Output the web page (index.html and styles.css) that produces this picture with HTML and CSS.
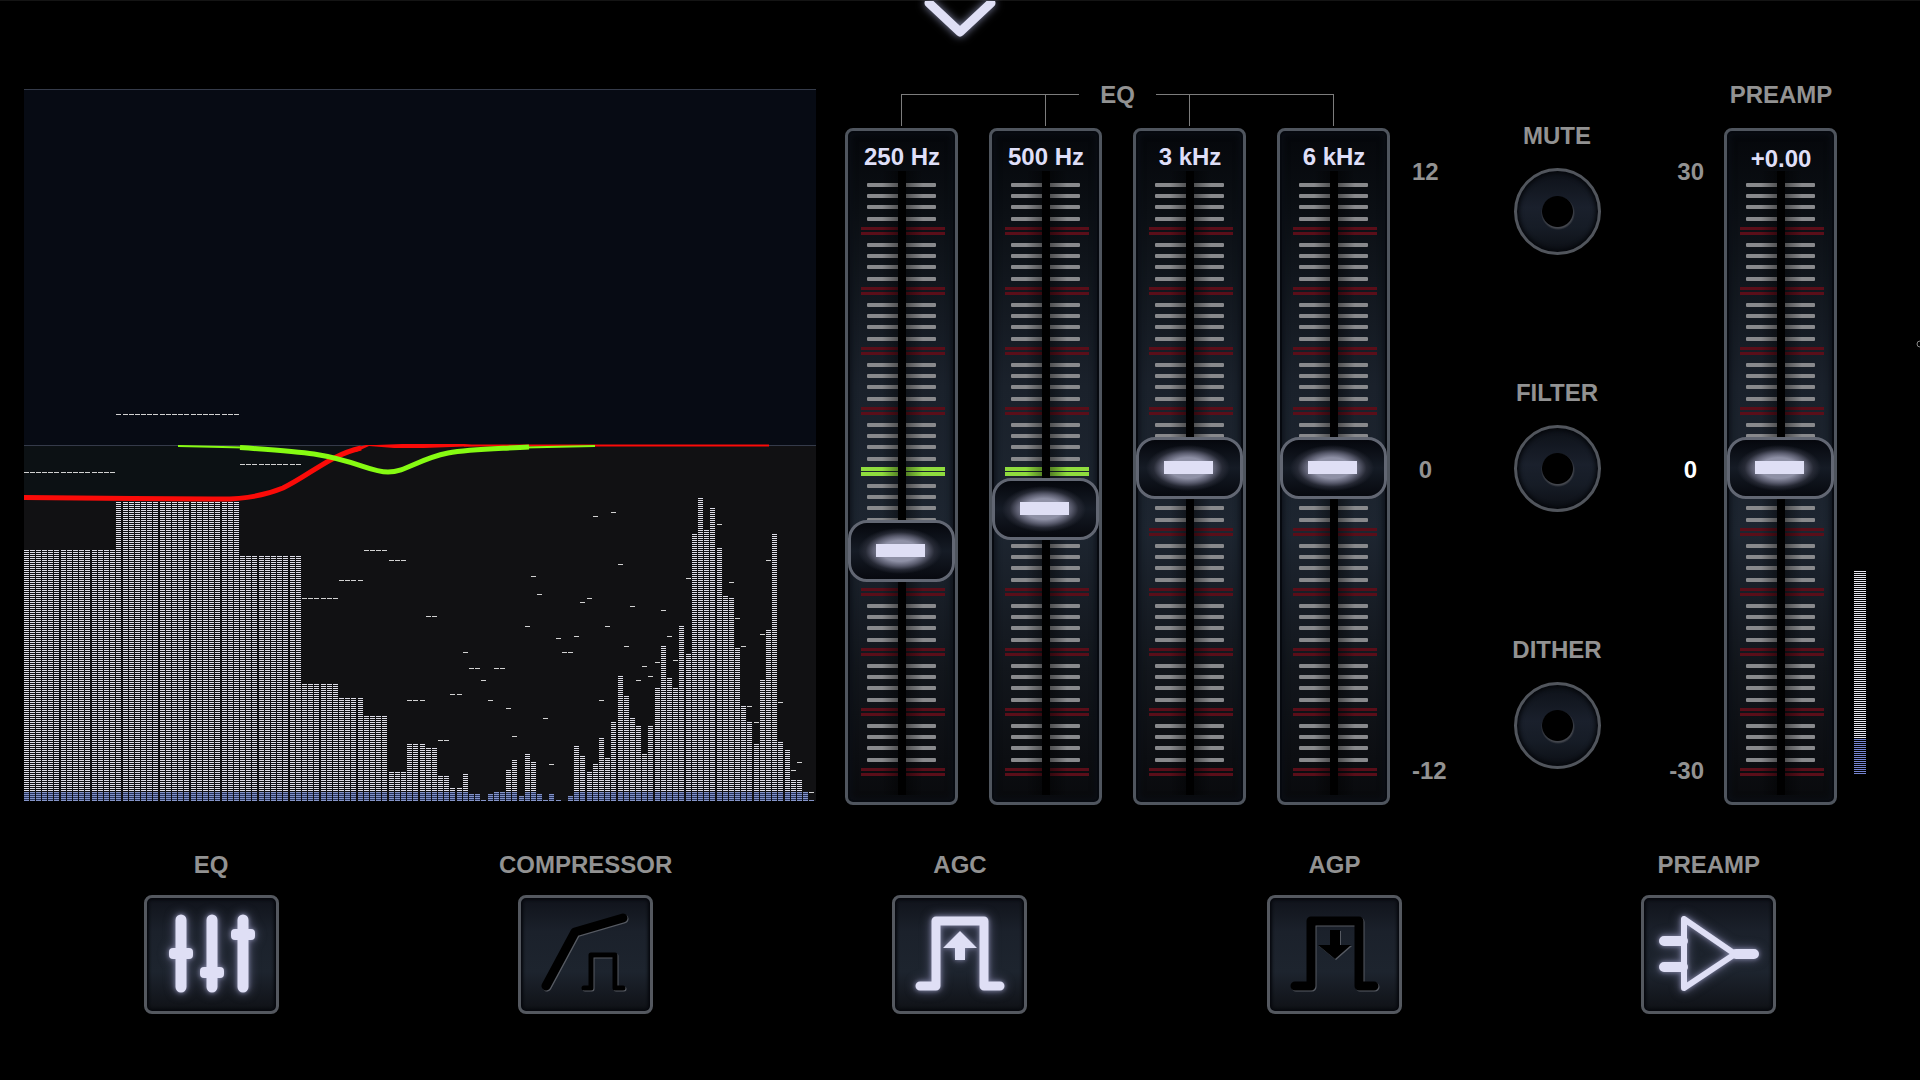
FILE: index.html
```
<!DOCTYPE html>
<html lang="en">
<head>
<meta charset="utf-8">
<meta name="viewport" content="width=device-width, initial-scale=1">
<title>Equalizer</title>
<link rel="stylesheet" href="styles.css">
</head>
<body>
<header class="topbar">
  <button class="collapse" aria-label="Collapse">
    <svg width="80" height="44" viewBox="0 0 80 44"><path class="lit-line" d="M9 2 40 31 71 2" stroke-width="9"/></svg>
  </button>
</header>

<main class="console">
  <svg class="spectrum" id="spectrum" viewBox="0 0 792 713" preserveAspectRatio="none" role="img" aria-label="Spectrum">
    <rect class="zone-upper" width="792" height="356"/>
    <rect class="zone-lower" y="356" width="792" height="356"/>
    <path class="zone-cut" d="M0 356V408L189 410C236 410 256 395 276 389L309 369 344 356Z"/>
    <rect class="rule" width="792" height="1"/>
    <rect class="rule" y="356" width="792" height="1"/>
    <g shape-rendering="crispEdges">
      <path id="bars" class="bars"/>
      <path id="floor" class="floor"/>
      <path id="floor-lines" class="floor-lines"/>
      <path id="peaks" class="peaks"/>
    </g>
    <path class="curve red" d="M0 408.500 109 409.500 189 410C222 411 242 406 259 399C286 386 306 366 337 359"/>
    <path class="red-fill" d="M330 359 342 356H352L378 355H440L455 357 400 359H370L345 357 332 363Z"/>
    <path class="curve red thin" d="M440 356.500H745"/>
    <path class="curve green thin" d="M154 357 220 358.500"/>
    <path class="curve green" d="M216 358.500C250 361 275 363 290 365C334 372 346 383 364 383S394 370 424 364C446 360 470 360 505 358"/>
    <path class="curve green thin" d="M500 358.500 571 357"/>
  </svg>

  <section class="eq" aria-label="EQ">
    <div class="bracket">
      <span class="arm arm-left"></span>
      <h2>EQ</h2>
      <span class="arm arm-right"></span>
    </div>
    <div class="strips">
      <div class="strip">
        <label for="b1">250 Hz</label>
        <svg class="ticks marked" width="107" height="671"></svg>
        <input id="b1" type="range" min="-12" max="12" step="any" value="-3.340">
      </div>
      <div class="strip">
        <label for="b2">500 Hz</label>
        <svg class="ticks marked" width="107" height="671"></svg>
        <input id="b2" type="range" min="-12" max="12" step="any" value="-1.650">
      </div>
      <div class="strip">
        <label for="b3">3 kHz</label>
        <svg class="ticks" width="107" height="671"></svg>
        <input id="b3" type="range" min="-12" max="12" step="any" value="0">
      </div>
      <div class="strip">
        <label for="b4">6 kHz</label>
        <svg class="ticks" width="107" height="671"></svg>
        <input id="b4" type="range" min="-12" max="12" step="any" value="0">
      </div>
    </div>
  </section>

  <div class="scale scale-left">
    <span>12</span><span class="zero">0</span><span>-12</span>
  </div>

  <div class="knobs">
    <label class="knob">MUTE<input type="checkbox"></label>
    <label class="knob">FILTER<input type="checkbox"></label>
    <label class="knob">DITHER<input type="checkbox"></label>
  </div>

  <div class="scale scale-right">
    <span>30</span><span class="zero active">0</span><span>-30</span>
  </div>

  <section class="preamp" aria-label="Preamp">
    <div class="preamp-main">
      <h2>PREAMP</h2>
      <div class="strip strip-value">
        <label for="pre">+0.00</label>
        <svg class="ticks" width="107" height="671"></svg>
        <input id="pre" type="range" min="-30" max="30" step="any" value="0">
      </div>
    </div>
    <div class="level" role="img" aria-label="Level"></div>
  </section>
</main>

<nav class="modules" aria-label="Modules">
  <div class="module">
    <label for="m1">EQ</label>
    <button id="m1" class="on" aria-pressed="true">
      <svg viewBox="0 0 135 119"><g class="lit-line" stroke-width="11"><path d="M37 25V92M68 25V92M99 25V92"/></g><g class="lit"><rect x="25" y="53" width="24" height="11" rx="4"/><rect x="56" y="72" width="24" height="11" rx="4"/><rect x="87" y="34" width="24" height="11" rx="4"/></g></svg>
    </button>
  </div>
  <div class="module">
    <label for="m2">COMPRESSOR</label>
    <button id="m2" aria-pressed="false">
      <svg viewBox="0 0 135 119"><g class="cut-line"><path d="M28 91 57 37 105 23" stroke-width="9"/><path d="M66 93H73V60H97V93H105" stroke-width="5"/></g></svg>
    </button>
  </div>
  <div class="module">
    <label for="m3">AGC</label>
    <button id="m3" class="on" aria-pressed="true">
      <svg viewBox="0 0 135 119"><path class="lit-line" d="M28 91H44V26H92V91H108" stroke-width="9"/><path class="lit" d="M68 36 85 53H73V65H63V53H51Z"/></svg>
    </button>
  </div>
  <div class="module">
    <label for="m4">AGP</label>
    <button id="m4" aria-pressed="false">
      <svg viewBox="0 0 135 119"><g class="cut"><path class="cut-stroke" d="M28 91H44V26H92V91H107" stroke-width="9"/><path d="M63 35H73V50H84L68 64 51 50H63Z"/></g></svg>
    </button>
  </div>
  <div class="module">
    <label for="m5">PREAMP</label>
    <button id="m5" class="on" aria-pressed="true">
      <svg viewBox="0 0 135 119"><g class="lit-line"><path d="M43 24V93L94 59Z" stroke-width="6"/><path d="M23 46H42M23 72H42M95 59H113" stroke-width="10"/></g></svg>
    </button>
  </div>
</nav>
<svg class="edge-mark" width="4" height="8" aria-hidden="true"><circle cx="4" cy="4" r="3"/></svg>
<script src="app.js"></script>
</body>
</html>
```
FILE: styles.css
```
* { box-sizing: border-box; }

body {
  position: relative;
  margin: 0;
  min-height: 100vh;
  background: #000;
  color: #929292;
  font: bold 24px/28px "Liberation Sans", Arial, sans-serif;
  overflow-x: hidden;
}

h2 { margin: 0; font: inherit; }

.topbar {
  display: flex;
  justify-content: center;
  height: 80px;
  border-top: 1px solid #141414;
}

.collapse {
  height: 44px;
  padding: 0;
  border: 0;
  background: none;
}

svg { display: block; }

.lit { fill: #dfdff5; }
.lit-line {
  fill: none;
  stroke: #dfdff5;
  stroke-linecap: round;
  stroke-linejoin: round;
}
.collapse svg { filter: drop-shadow(0 0 4px #8488a8); }

.console {
  display: grid;
  grid-template-columns: minmax(0, 1fr) 545px 44px 166px 44px 142px;
  column-gap: 20px;
  padding: 0 54px 0 24px;
}

/* Spectrum */
.spectrum {
  width: calc(100% - 9px);
  height: 713px;
  margin-top: 9px;
}
.zone-upper { fill: #070b14; }
.zone-lower { fill: #111113; }
.zone-cut { fill: #0c1114; }
.rule { fill: #353b4a; }
.bars { fill: #dedee8; }
.peaks { fill: #d2d2d2; }
.floor { fill: #26335c; }
.floor-lines { fill: #8494c8; }
.curve { fill: none; stroke-width: 5; }
.curve.thin { stroke-width: 2; }
.red { stroke: #fb0b08; }
.red-fill { fill: #fb0b08; }
.green { stroke: #86fb12; }

/* Channel strips */
.bracket {
  display: flex;
  justify-content: space-between;
  height: 48px;
  padding: 1px 56px 0;
}
.arm {
  width: 178px;
  height: 32px;
  margin-top: 13px;
  border-top: 1px solid #7d7d7d;
}
.arm-left {
  border-left: 1px solid #7d7d7d;
  background: linear-gradient(#7d7d7d, #7d7d7d) 143px 0 / 1px 100% no-repeat;
}
.arm-right {
  border-right: 1px solid #7d7d7d;
  background: linear-gradient(#7d7d7d, #7d7d7d) 33px 0 / 1px 100% no-repeat;
}

.strips { display: flex; justify-content: space-between; }

.strip {
  display: grid;
  width: 113px;
  height: 677px;
  border: 3px solid #4f555e;
  border-radius: 8px;
  background: linear-gradient(#05070b, #0b0f14 12%, #1a212b 38%, #1d2530 60%, #12161c 80%, #090a0d);
  box-shadow: inset 0 0 0 2px #06090f, inset 0 0 6px 3px #0b0f16;
}
.strip > * { grid-area: 1 / 1; }
.strip label {
  justify-self: center;
  align-self: start;
  padding: 12px 0 0 1px;
  color: #dfdff8;
  white-space: nowrap;
}
.strip-value label { padding-top: 14px; }

.tick { fill: #88898c; }
.tick-major { fill: #5a0e19; }
.tick-zero { fill: #8fdc3e; }
.slot { fill: #000; }

.strip input {
  appearance: none;
  writing-mode: vertical-lr;
  direction: rtl;
  width: 107px;
  height: 658px;
  margin: 8px 0 0;
  background: none;
}
.strip input::-webkit-slider-runnable-track { width: 107px; background: none; }
.strip input::-webkit-slider-thumb {
  appearance: none;
  width: 107px;
  height: 62px;
  border: 3px solid #626773;
  border-radius: 19px;
  background:
    linear-gradient(#dfdff5, #dfdff5) 25px 21px / 49px 13px no-repeat,
    radial-gradient(ellipse 42px 23px at 49px 28px, #8f91a6 45%, #5a5c6e 65%, #2b2e3acc 82%, transparent),
    linear-gradient(#05070d, #151b25 50%, #07090f);
}

/* Scales */
.scale {
  display: flex;
  flex-direction: column;
  justify-content: space-between;
  height: 705px;
  padding-top: 78px;
}
.scale-left { align-items: flex-start; padding-left: 2px; }
.scale-right { align-items: flex-end; }
.zero { width: 27px; margin-bottom: 4px; text-align: center; }
.active { color: #fff; }

/* Knobs */
.knobs {
  display: flex;
  flex-direction: column;
  align-items: center;
  gap: 124px;
  padding-top: 42px;
}
.knob {
  display: flex;
  flex-direction: column;
  align-items: center;
  gap: 18px;
}
.knob input {
  appearance: none;
  width: 87px;
  height: 87px;
  margin: 0;
  border: 3px solid #51555c;
  border-radius: 50%;
  background:
    radial-gradient(circle at 50% 50%, #000 15px, transparent 16px),
    radial-gradient(circle at 41px 42px, #43464d 15px, transparent 17px),
    linear-gradient(#0d1118, #1a202c 45%, #161c26 70%, #0c0f15);
  box-shadow: inset 0 0 4px 2px #05070b;
}

/* Preamp */
.preamp { display: flex; gap: 17px; }
.preamp-main { width: 113px; }
.preamp h2 { height: 48px; padding: 1px 0 0 1px; text-align: center; }
.level {
  width: 12px;
  height: 203px;
  margin-top: 491px;
  background:
    repeating-linear-gradient(transparent 0 1px, #000 1px 2px),
    linear-gradient(#e4e4ee 167px, #7684d0 167px);
}

/* Module buttons */
.modules {
  display: grid;
  grid-template-columns: repeat(5, 1fr);
  padding: 46px 24px;
}
.module {
  display: flex;
  flex-direction: column;
  align-items: center;
  gap: 16px;
}
.module button {
  width: 135px;
  height: 119px;
  padding: 0;
  border: 3px solid #54585f;
  border-radius: 8px;
  background: linear-gradient(#10131b, #1b212b 30%, #1d242e 65%, #0f1116);
  box-shadow: inset 0 0 3px 2px #06080d;
}
.module svg { width: 135px; height: 119px; margin: -3px; overflow: visible; }
.on svg { filter: drop-shadow(0 0 2px #80839f) drop-shadow(0 0 5px #5c5f7c); }
.cut-line {
  fill: none;
  stroke: #000;
  stroke-linecap: round;
  stroke-linejoin: round;
}
.cut-stroke { fill: none; stroke: #000; stroke-linecap: round; stroke-linejoin: round; }
.cut-line, .cut { filter: drop-shadow(1px 1px 0 #565a62); }

.edge-mark { position: absolute; right: 0; top: 340px; fill: none; stroke: #8a8a8a; }
```
FILE: app.js
```
// Each entry: [number of columns, top of the bar, height of the peak marker]; 0 means none.
const BOTTOM = 712;
const columns = [
  [15, 461, 383], [20, 413, 325], [10, 467, 375], [6, 595, 509], [4, 609, 491], [4, 627, 461],
  [3, 683, 471], [3, 655, 611], [2, 659, 527], [2, 687, 651], [2, 699, 605], [1, 685, 563],
  [2, 705, 579], [1, 711, 591], [1, 705, 611], [2, 703, 579], [1, 681, 619], [1, 671, 647],
  [1, 707, 0], [1, 665, 537], [1, 673, 487], [1, 705, 505], [1, 711, 629], [1, 705, 675],
  [1, 711, 549], [1, 0, 563], [1, 707, 563], [1, 657, 547], [1, 667, 513], [1, 683, 509],
  [1, 675, 427], [1, 649, 611], [1, 669, 537], [1, 633, 423], [1, 587, 475], [1, 607, 557],
  [1, 629, 517], [1, 637, 591], [1, 665, 577], [1, 637, 587], [1, 599, 573], [1, 557, 521],
  [1, 589, 547], [1, 599, 571], [1, 537, 0], [1, 565, 489], [1, 445, 0], [1, 409, 0],
  [1, 441, 0], [1, 419, 0], [1, 459, 435], [1, 507, 0], [1, 509, 493], [1, 559, 529],
  [1, 617, 557], [1, 633, 617], [1, 655, 633], [1, 591, 545], [1, 541, 471], [1, 445, 0],
  [1, 653, 613], [1, 661, 0], [1, 691, 681], [1, 691, 673], [1, 703, 0], [1, 711, 703]
];

let bars = "", peaks = "", floor = "", floorLines = "", index = 0;
const cell = (x, y, h = 1) => `M${x} ${y}h5v${h}h-5z`;
for (const [count, top, peak] of columns) {
  for (let i = 0; i < count; i++, index++) {
    const x = Math.floor(index * 6.1875);
    if (peak) peaks += cell(x, peak);
    if (!top) continue;
    for (let y = top; y < BOTTOM; y += 2) {
      if (y < 703) bars += cell(x, y);
      else floorLines += cell(x, y);
    }
    const start = Math.max(top, 703);
    floor += cell(x, start, BOTTOM - start);
  }
}
const draw = (id, d) => document.getElementById(id).setAttribute("d", d);
draw("bars", bars);
draw("peaks", peaks);
draw("floor", floor);
draw("floor-lines", floorLines);

// Slider graduations: ten groups of four minor lines closed by a double major line.
document.querySelectorAll(".ticks").forEach((svg, n) => {
  const zero = svg.classList.contains("marked");
  let out = `<defs><linearGradient id="shade${n}"><stop offset="0" stop-opacity="0"/><stop offset=".5" stop-opacity=".5"/><stop offset="1" stop-opacity="0"/></linearGradient></defs>`;
  for (let g = 0; g < 10; g++) {
    const base = 52 + Math.floor(g * 60.2);
    for (let i = 0; i < 4; i++) {
      out += `<rect class="tick" x="19" y="${base + Math.round(i * 11.2)}" width="69" height="4" rx="1"/>`;
    }
    const isZero = zero && g === 4;
    const cls = isZero ? "tick-zero" : "tick-major";
    const size = isZero ? 4 : 3;
    out += `<rect class="${cls}" x="13" y="${base + 44}" width="84" height="${size}"/>`;
    out += `<rect class="${cls}" x="13" y="${base + 49}" width="84" height="${size}"/>`;
  }
  out += `<rect x="34" y="40" width="41" height="624" fill="url(#shade${n})"/>`;
  out += `<rect class="slot" x="50" y="40" width="8" height="624"/>`;
  svg.innerHTML = out;
});
```
